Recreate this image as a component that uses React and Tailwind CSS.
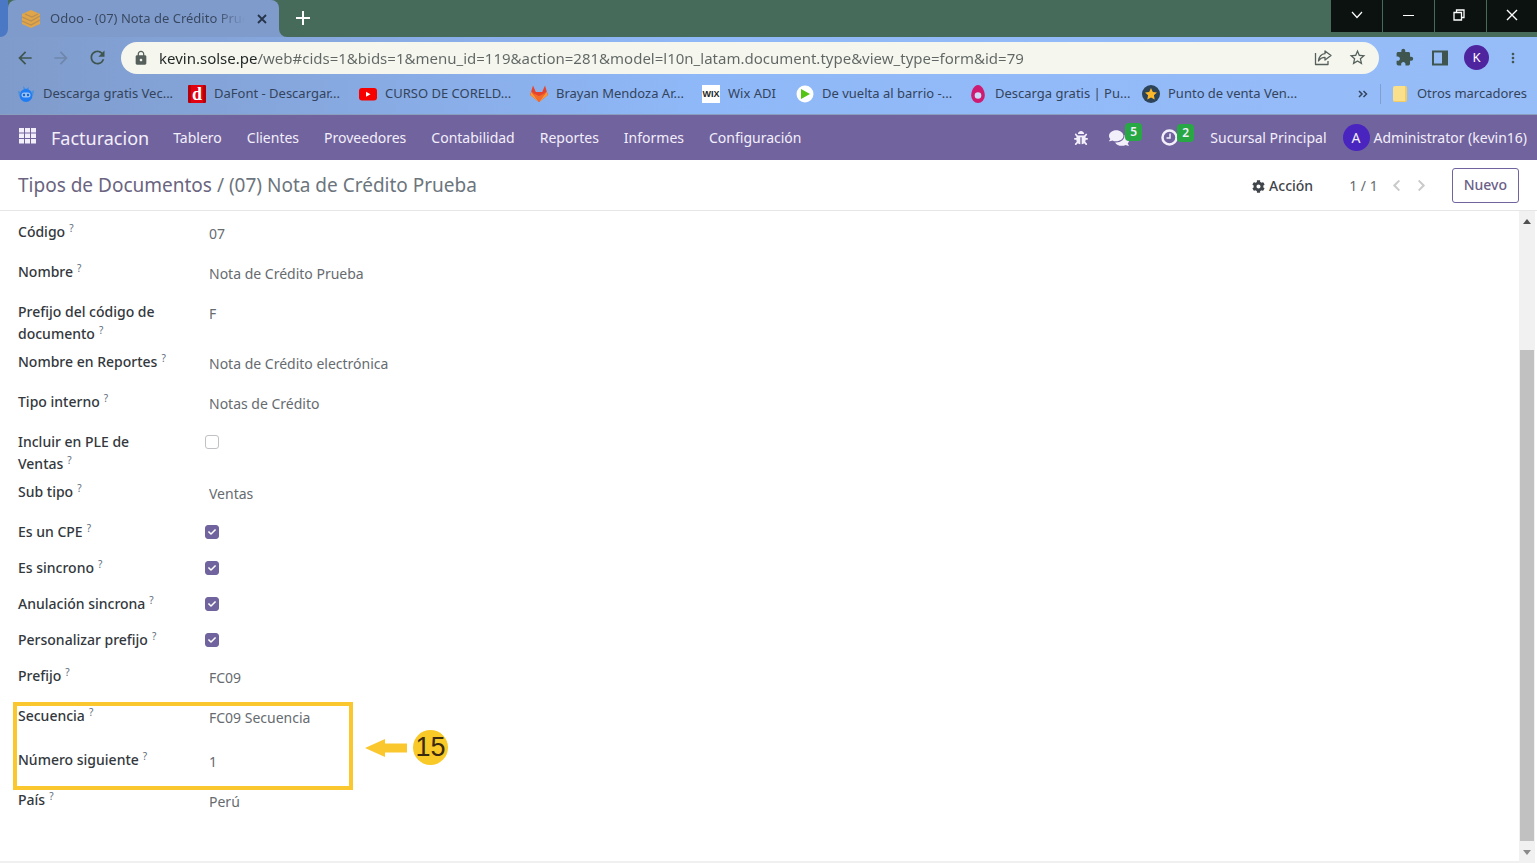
import { useState } from "react";
import { FaBug, FaCheck, FaCog, FaComments, FaChevronLeft, FaChevronRight } from "react-icons/fa";
import { MdArrowBack, MdArrowForward, MdRefresh, MdLock, MdExtension, MdMoreVert, MdStarBorder } from "react-icons/md";

function DafontIcon() {
  return (
    <span className="flex h-[18px] w-[18px] items-center justify-center rounded-[1px] border-x-3 border-[#b3000b] bg-[#e3000f] font-['Liberation_Serif',serif] text-lg leading-none font-bold text-white">
      d
    </span>
  );
}

function RobotIcon() {
  return (
    <svg width="18" height="18" viewBox="0 0 18 18">
      <path d="M6 1l3 3 3-2-1 4H7z" fill="#3f8fe8" />
      <circle cx="9" cy="10.5" r="6.5" fill="#1f7cf2" />
      <path d="M1 6l3 1-2 4zM17 5l-3 2 2 4z" fill="#4b90dc" />
      <rect x="4.5" y="7.5" width="9" height="5" rx="2.5" fill="#9cc4f5" />
      <circle cx="7" cy="10" r="1.2" fill="#1b63cf" />
      <circle cx="11" cy="10" r="1.2" fill="#1b63cf" />
    </svg>
  );
}

function YoutubeIcon() {
  return (
    <svg width="18" height="18" viewBox="0 0 18 18">
      <rect y="3" width="18" height="12.5" rx="3" fill="#f70000" />
      <path d="M7 6.8v5l4.5-2.5z" fill="#fff" />
    </svg>
  );
}

function FoxIcon() {
  return (
    <svg width="18" height="18" viewBox="0 0 18 18">
      <path d="M3 .5L5.800 7h6.400L15 .5 17.800 10 9 17 .2 10z" fill="#e5432d" />
      <path d="M.2 10l1.400-3.500L9 17zM17.800 10l-1.400-3.500L9 17z" fill="#f99a36" />
      <path d="M1.600 7.500L9 11l7.400-3.500L9 17z" fill="#f26a2c" />
    </svg>
  );
}

function WixIcon() {
  return (
    <span className="flex h-[18px] w-[18px] items-center justify-center bg-white font-['Liberation_Sans',sans-serif] text-[9px] leading-none font-bold text-[#22261c]">
      WIX
    </span>
  );
}

function PlayIcon() {
  return (
    <svg width="18" height="18" viewBox="0 0 18 18">
      <circle cx="9" cy="9" r="8.5" fill="#fff" />
      <path d="M5 4v10l9-5z" fill="#55c414" />
    </svg>
  );
}

function DropIcon() {
  return (
    <svg width="18" height="18" viewBox="0 0 18 18">
      <path d="M9 0c4 0 6.800 6 6.800 10.500a6.800 7.500 0 0 1-13.600 0C2.200 6 5 0 9 0z" fill="#cf1a72" />
      <circle cx="9" cy="10.500" r="3.300" fill="#c9dcfa" />
    </svg>
  );
}

function StarIcon() {
  return (
    <svg width="18" height="18" viewBox="0 0 18 18">
      <circle cx="9" cy="9" r="9" fill="#2d4358" />
      <path d="M9 3l1.800 3.900 4.200.500-3.100 2.900.8 4.200L9 12.400l-3.700 2.100.8-4.200L3 7.400l4.200-.5z" fill="#fdb72b" />
    </svg>
  );
}

const URL_TEXT =
  "kevin.solse.pe/web#cids=1&bids=1&menu_id=119&action=281&model=l10n_latam.document.type&view_type=form&id=79";

const BOOKMARKS = [
  { label: "Descarga gratis Vec...", Icon: RobotIcon, width: "w-[171px]" },
  { label: "DaFont - Descargar...", Icon: DafontIcon, width: "w-[171px]" },
  { label: "CURSO DE CORELD...", Icon: YoutubeIcon, width: "w-[171px]" },
  { label: "Brayan Mendoza Ar...", Icon: FoxIcon, width: "w-[172px]" },
  { label: "Wix ADI", Icon: WixIcon, width: "w-[94px]" },
  { label: "De vuelta al barrio -...", Icon: PlayIcon, width: "w-[173px]" },
  { label: "Descarga gratis | Pu...", Icon: DropIcon, width: "w-[173px]" },
  { label: "Punto de venta Ven...", Icon: StarIcon, width: "w-[171px]" },
];

const MENU = ["Tablero", "Clientes", "Proveedores", "Contabilidad", "Reportes", "Informes", "Configuración"];

const FIELDS = [
  { id: "codigo", label: "Código", value: "07", height: "h-10" },
  { id: "nombre", label: "Nombre", value: "Nota de Crédito Prueba", height: "h-10" },
  { id: "prefijo_doc", label: "Prefijo del código de documento", value: "F", height: "h-[50px]" },
  { id: "reportes", label: "Nombre en Reportes", value: "Nota de Crédito electrónica", height: "h-10" },
  { id: "tipo", label: "Tipo interno", value: "Notas de Crédito", height: "h-10", type: "select" },
  { id: "ple", label: "Incluir en PLE de Ventas", value: false, height: "h-[50px]", type: "check" },
  { id: "subtipo", label: "Sub tipo", value: "Ventas", height: "h-10", type: "select" },
  { id: "cpe", label: "Es un CPE", value: true, height: "h-9", type: "check" },
  { id: "sincrono", label: "Es sincrono", value: true, height: "h-9", type: "check" },
  { id: "anulacion", label: "Anulación sincrona", value: true, height: "h-9", type: "check" },
  { id: "personalizar", label: "Personalizar prefijo", value: true, height: "h-9", type: "check" },
  { id: "prefijo", label: "Prefijo", value: "FC09", height: "h-10" },
];

const SEQUENCE_FIELDS = [
  { id: "secuencia", label: "Secuencia", value: "FC09 Secuencia", height: "h-11" },
  { id: "siguiente", label: "Número siguiente", value: "1", height: "h-10" },
];

function TabStrip() {
  return (
    <div className="flex h-[37px] items-start bg-[#466b5b]">
      <div className="h-full w-2 shrink-0 bg-[#7f9bcb]">
        <div className="h-full rounded-br-lg bg-[#4a78c4]" />
      </div>
      <div className="flex h-full w-[271px] items-center rounded-t-lg bg-[#7f9bcb] pr-3 pl-3">
        <svg width="22" height="20" viewBox="0 0 22 20" className="shrink-0">
          <path d="M11 1l9 4v10l-9 4-9-4V5z" fill="#e0a548" />
          <path d="M2 8l9 4 9-5M2 12l9 4 9-5M5 5l7 3 6-3" stroke="#b98f55" strokeWidth="1.300" fill="none" />
        </svg>
        <span className="ml-2 w-[196px] overflow-hidden bg-linear-to-r from-[#37475f] from-85% to-transparent bg-clip-text text-[13px] whitespace-nowrap text-transparent">
          Odoo - (07) Nota de Crédito Prueba
        </span>
        <button aria-label="Cerrar pestaña" className="ml-3 shrink-0 text-[#26344a]">
          <svg width="10" height="10" viewBox="0 0 10 10" stroke="currentColor" strokeWidth="1.800">
            <path d="M1 1l8 8M9 1L1 9" />
          </svg>
        </button>
      </div>
      <div className="h-full w-2 bg-[#7f9bcb]">
        <div className="h-full rounded-bl-lg bg-[#466b5b]" />
      </div>
      <button aria-label="Nueva pestaña" className="ml-2 flex h-9 w-4 items-center justify-center text-white">
        <svg width="14" height="14" viewBox="0 0 14 14" stroke="currentColor" strokeWidth="2">
          <path d="M7 0v14M0 7h14" />
        </svg>
      </button>
      <div className="ml-auto flex h-8 gap-px bg-[#466b5b] text-white">
        <button aria-label="Buscar pestañas" className="flex w-[51px] items-center justify-center bg-[#0c1210] pb-0.5">
          <svg width="12" height="8" viewBox="0 0 12 8" fill="none" stroke="currentColor" strokeWidth="1.200">
            <path d="M1 1l5 5.500L11 1" />
          </svg>
        </button>
        <button aria-label="Minimizar" className="flex w-[51px] items-center justify-center bg-[#0c1210] pb-0.5">
          <span className="h-px w-[11px] bg-white" />
        </button>
        <button aria-label="Restaurar" className="flex w-[51px] items-center justify-center bg-[#0c1210] pr-1 pb-0.5">
          <svg width="12" height="12" viewBox="0 0 12 12" fill="none" stroke="currentColor" strokeWidth="1.300">
            <path d="M1 3.500h7.500V11H1zM3.500 3.500V1H11v7.500H8.500" />
          </svg>
        </button>
        <button aria-label="Cerrar" className="flex w-[50px] items-center justify-center bg-[#0c1210] pb-0.5">
          <svg width="12" height="12" viewBox="0 0 12 12" stroke="currentColor" strokeWidth="1.400">
            <path d="M1 1l10 10M11 1L1 11" />
          </svg>
        </button>
      </div>
    </div>
  );
}

function AddressBar() {
  return (
    <div className="flex h-[41px] items-center text-[#3f5650]">
      <div className="flex w-[121px] shrink-0 items-center gap-4 pl-[15px]">
        <button aria-label="Atrás"><MdArrowBack size={20} /></button>
        <button aria-label="Adelante" className="text-[#6f87ab]"><MdArrowForward size={20} /></button>
        <button aria-label="Recargar"><MdRefresh size={21} /></button>
      </div>
      <div className="flex h-8 grow items-center rounded-full bg-[#f5f6ee] pr-3 pl-3 text-[#55605c]">
        <MdLock size={16} />
        {/* hard gradient stop: the host is darker than the rest of the address */}
        <input
          type="text"
          aria-label="Dirección"
          defaultValue={URL_TEXT}
          className="ml-2.5 h-6 grow bg-linear-to-r from-[#1f2624] from-[99px] to-[#5f6664] to-[99px] bg-clip-text text-[15px] text-transparent outline-none"
        />
        <button aria-label="Compartir" className="mr-4">
          <svg width="18" height="17" viewBox="0 0 18 17" fill="none" stroke="currentColor" strokeWidth="1.300" strokeLinejoin="round">
            <path d="M1.500 4v11.500h12.500V12M11 2l6 4.500-6 4.500V8.300C8 8.300 6 9.500 4.500 12 5 8 7.500 5 11 4.700z" />
          </svg>
        </button>
        <button aria-label="Marcador"><MdStarBorder size={19} /></button>
      </div>
      <div className="flex shrink-0 items-center pr-4 pl-4">
        <button aria-label="Extensiones"><MdExtension size={19} /></button>
        <button aria-label="Panel lateral" className="ml-[18px]">
          <svg width="16" height="16" viewBox="0 0 16 16">
            <path d="M1 1.500h14v13H1z" fill="none" stroke="currentColor" strokeWidth="2" />
            <path d="M10 1h6v14h-6z" fill="currentColor" />
          </svg>
        </button>
        <button className="ml-4 flex h-[25px] w-[25px] items-center justify-center rounded-full bg-[#4f249f] text-[13px] text-white">
          K
        </button>
        <button aria-label="Menú" className="ml-4 flex w-4 justify-center"><MdMoreVert size={20} /></button>
      </div>
    </div>
  );
}

function Bookmarks() {
  return (
    <div className="flex h-[37px] items-center border-b border-[#8a9fbd] pb-1 pl-[17px] text-[13px] text-[#33445c]">
      {BOOKMARKS.map(({ label, Icon, width }) => (
        <a key={label} href="#" className={`flex shrink-0 items-center gap-2 whitespace-nowrap ${width}`}>
          <span className="shrink-0"><Icon /></span>
          {label}
        </a>
      ))}
      <button aria-label="Más marcadores" className="ml-auto">
        <svg width="10" height="8" viewBox="0 0 10 8" fill="none" stroke="currentColor" strokeWidth="1.500">
          <path d="M1 1l3 3-3 3M5.500 1l3 3-3 3" />
        </svg>
      </button>
      <span className="ml-3 h-5 w-px bg-[#7f9fd0]" />
      <a href="#" className="ml-3 flex items-center gap-2.5 pr-2.5 whitespace-nowrap">
        <span className="h-4 w-[14px] rounded-xs border-r-2 border-b border-[#f2cb62] bg-[#fbe08c]" />
        Otros marcadores
      </a>
    </div>
  );
}

function Badge({ children }) {
  return (
    <span className="absolute -top-[5px] left-4 h-[18px] rounded-sm bg-[#28a745] px-[5px] text-xs leading-[18px] font-semibold">
      {children}
    </span>
  );
}

function Navbar() {
  return (
    <nav className="flex h-[45px] items-center bg-[#71639e] pr-2.5 pl-[19px] text-sm text-[#f3effa]">
      <button aria-label="Aplicaciones" className="pb-1">
        <svg width="17" height="16" viewBox="0 0 17 16" fill="currentColor">
          {[0, 6, 12].map((x) => [0, 5.5, 11].map((y) => <rect key={`${x}-${y}`} x={x} y={y} width="5" height="4.500" />))}
        </svg>
      </button>
      <a href="#" className="ml-[15px] text-lg">Facturacion</a>
      <div className="ml-6 flex gap-[25px]">
        {MENU.map((item) => (
          <a key={item} href="#">{item}</a>
        ))}
      </div>
      <div className="ml-auto flex items-center whitespace-nowrap">
        <button aria-label="Depurar"><FaBug size={14} /></button>
        <button aria-label="Mensajes" className="relative ml-[21px]">
          <FaComments size={20} />
          <Badge>5</Badge>
        </button>
        <button aria-label="Actividades" className="relative ml-8">
          <svg width="17" height="17" viewBox="0 0 17 17" fill="none" stroke="currentColor">
            <circle cx="8.500" cy="8.500" r="7" strokeWidth="2.500" />
            <path d="M9 4.500V9H5.500" strokeWidth="1.500" />
          </svg>
          <Badge>2</Badge>
        </button>
        <a href="#" className="ml-8">Sucursal Principal</a>
        <button className="ml-4 flex items-center gap-1">
          <span className="flex h-[27px] w-[27px] items-center justify-center rounded-full bg-[#4a24bf]">A</span>
          Administrator (kevin16)
        </button>
      </div>
    </nav>
  );
}

function ControlPanel() {
  return (
    <div className="flex h-[51px] items-center border-b border-[#e6e6e8] bg-white pr-[18px] pl-[18px] text-sm text-[#495057]">
      <h1 className="pt-0.5 text-[19px] text-[#6c757d]">
        <a href="#" className="text-[#6a6480]">Tipos de Documentos</a> / (07) Nota de Crédito Prueba
      </h1>
      <button className="ml-auto flex items-center gap-1 pt-0.5 font-medium text-[#3f454b]">
        <FaCog size={13} /> Acción
      </button>
      <span className="ml-9 pt-0.5 text-[#666b70]">1 / 1</span>
      <button aria-label="Anterior" className="ml-3 text-[#c8cacc]"><FaChevronLeft size={13} /></button>
      <button aria-label="Siguiente" className="ml-3 text-[#c8cacc]"><FaChevronRight size={13} /></button>
      <button className="ml-6 h-[35px] rounded-[3px] border border-[#71639e] px-[11px] font-medium text-[#6a6088]">Nuevo</button>
    </div>
  );
}

function Field({ field }) {
  const { id, label, type, height } = field;
  const [value, setValue] = useState(field.value);

  return (
    <div className={`flex items-start ${height}`}>
      <label htmlFor={id} className="w-[187px] shrink-0 pr-8 text-sm leading-[22px] font-medium text-[#33383d]">
        {label}
        <sup className="ml-1 text-[10px] leading-none font-normal text-[#5d6c7a]">?</sup>
      </label>
      {type === "check" ? (
        <span className="relative mt-1 h-[14px] w-[14px]">
          <input
            id={id}
            type="checkbox"
            checked={value}
            onChange={(e) => setValue(e.target.checked)}
            className="block h-[14px] w-[14px] appearance-none rounded-[3px] border border-[#bfc1c4] bg-white checked:border-[#71639e] checked:bg-[#71639e]"
          />
          {value && <FaCheck size={8} className="pointer-events-none absolute top-[3px] left-[3px] text-white" />}
        </span>
      ) : type === "select" ? (
        <select
          id={id}
          value={value}
          onChange={(e) => setValue(e.target.value)}
          className="mt-0.5 h-[22px] w-80 appearance-none bg-transparent pl-1 text-sm leading-[22px] text-[#666b70] outline-none"
        >
          <option>{field.value}</option>
        </select>
      ) : (
        <input
          id={id}
          type="text"
          value={value}
          onChange={(e) => setValue(e.target.value)}
          className="mt-0.5 h-[22px] w-80 bg-transparent pl-1 text-sm leading-[22px] text-[#666b70] outline-none"
        />
      )}
    </div>
  );
}

function Callout() {
  return (
    <>
      <div className="pointer-events-none absolute -top-[3px] -left-[5px] h-[88px] w-[340px] border-4 border-[#fbc72e]" />
      <div className="pointer-events-none absolute top-[25px] left-[347px] flex items-center gap-1.5">
        <svg width="42" height="18" viewBox="0 0 42 18" fill="#fbc72e">
          <path d="M0 9L20 0v4.500h22v9H20V18z" />
        </svg>
        <span className="flex h-[35px] w-[35px] items-center justify-center rounded-full bg-[#f8c927] font-['Liberation_Sans',sans-serif] text-[27px] leading-none text-[#3a2a12]">
          15
        </span>
      </div>
    </>
  );
}

function Scrollbar() {
  return (
    <div className="mr-0.5 flex w-4 shrink-0 flex-col items-center bg-[#f1f1f1]">
      <div className="flex h-[21px] items-center">
        <svg width="8" height="5" viewBox="0 0 8 5" fill="#505050"><path d="M4 0l4 5H0z" /></svg>
      </div>
      <div className="grow-[118]" />
      <div className="w-[14px] grow-[491] bg-[#c1c1c1]" />
      <div className="flex h-[22px] items-center">
        <svg width="8" height="5" viewBox="0 0 8 5" fill="#8a8a8a"><path d="M4 5L0 0h8z" /></svg>
      </div>
    </div>
  );
}

export default function App() {
  return (
    <div className="flex min-h-screen flex-col bg-white font-['Noto_Sans','Open_Sans',sans-serif]">
      <TabStrip />
      <div className="bg-linear-to-r from-[#7f9bcb] via-[#8fb8f8] via-45% to-[#97bdf8]">
        <AddressBar />
        <Bookmarks />
      </div>
      <Navbar />
      <ControlPanel />
      <main className="flex grow">
        <form className="grow border-b-2 border-[#f0f0f0] pt-2.5 pl-[18px]">
          {FIELDS.map((field) => (
            <Field key={field.id} field={field} />
          ))}
          <div className="relative">
            {SEQUENCE_FIELDS.map((field) => (
              <Field key={field.id} field={field} />
            ))}
            <Callout />
          </div>
          <Field field={{ id: "pais", label: "País", value: "Perú", height: "h-10" }} />
        </form>
        <Scrollbar />
      </main>
    </div>
  );
}
